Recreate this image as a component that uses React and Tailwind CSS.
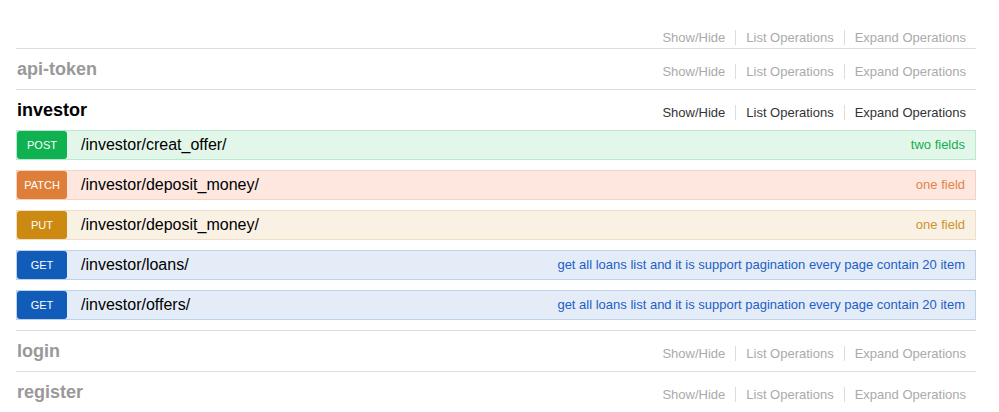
import React from "react";

const sections = [
  { name: "", open: false, top: true },
  { name: "api-token", open: false },
  { name: "investor", open: true },
  { name: "login", open: false },
  { name: "register", open: false },
];

const methodStyles = {
  POST: {
    badge: "bg-[#10b150]",
    row: "bg-[#e2f7e9] border-[#b9e9cf]",
    text: "text-[#14ad4e]",
  },
  PATCH: {
    badge: "bg-[#df7e39]",
    row: "bg-[#fde7df] border-[#f5d2c3]",
    text: "text-[#e2834a]",
  },
  PUT: {
    badge: "bg-[#cd8a13]",
    row: "bg-[#faf1e5] border-[#f0dec6]",
    text: "text-[#cf922a]",
  },
  GET: {
    badge: "bg-[#115cb9]",
    row: "bg-[#e4edf7] border-[#bdd3ec]",
    text: "text-[#1d5ec8]",
  },
};

const pagination =
  "get all loans list and it is support pagination every page contain 20 item";

const operations = [
  { method: "POST", path: "/investor/creat_offer/", summary: "two fields" },
  { method: "PATCH", path: "/investor/deposit_money/", summary: "one field" },
  { method: "PUT", path: "/investor/deposit_money/", summary: "one field" },
  { method: "GET", path: "/investor/loans/", summary: pagination },
  { method: "GET", path: "/investor/offers/", summary: pagination },
];

const Links = ({ open, top }) => (
  <ul
    className={`flex items-center text-[13px] ${top ? "" : "mt-[4px]"} ${
      open ? "text-[#333]" : "text-[#aaa]"
    }`}
  >
    <li className="px-[10px] leading-[15px]">Show/Hide</li>
    <li className="px-[10px] leading-[15px] border-l border-[#ddd]">
      List Operations
    </li>
    <li className="px-[10px] leading-[15px] border-l border-[#ddd]">
      Expand Operations
    </li>
  </ul>
);

const Operation = ({ method, path, summary }) => {
  const s = methodStyles[method];
  return (
    <li className={`flex items-center h-[30px] border ${s.row}`}>
      <span
        className={`w-[50px] h-[28px] rounded-[3px] flex items-center justify-center text-[11px] text-white ${s.badge}`}
      >
        {method}
      </span>
      <span className="ml-[14px] text-[16px] text-black">{path}</span>
      <span className={`ml-auto pr-[10px] text-[13px] ${s.text}`}>
        {summary}
      </span>
    </li>
  );
};

export default function App() {
  return (
    <div
      className="w-[999px] h-[412px] overflow-hidden bg-white pt-[8px] px-[16px]"
      style={{ fontFamily: '"Liberation Sans", Arial, sans-serif' }}
    >
      <div className="w-[960px]">
        {sections.map((sec, i) => (
          <div key={i} className="border-b border-[#ddd]">
            <div
              className={`h-[40px] flex justify-between ${
                sec.top ? "items-end pb-[3px]" : "items-center"
              }`}
            >
              <h2
                className={`text-[18px] font-bold pl-[1px] ${
                  sec.open ? "text-black" : "text-[#999]"
                }`}
              >
                {sec.name}
              </h2>
              <Links open={sec.open} top={sec.top} />
            </div>
            {sec.open && (
              <ul className="flex flex-col gap-[10px] pb-[10px]">
                {operations.map((op, j) => (
                  <Operation key={j} {...op} />
                ))}
              </ul>
            )}
          </div>
        ))}
      </div>
    </div>
  );
}
